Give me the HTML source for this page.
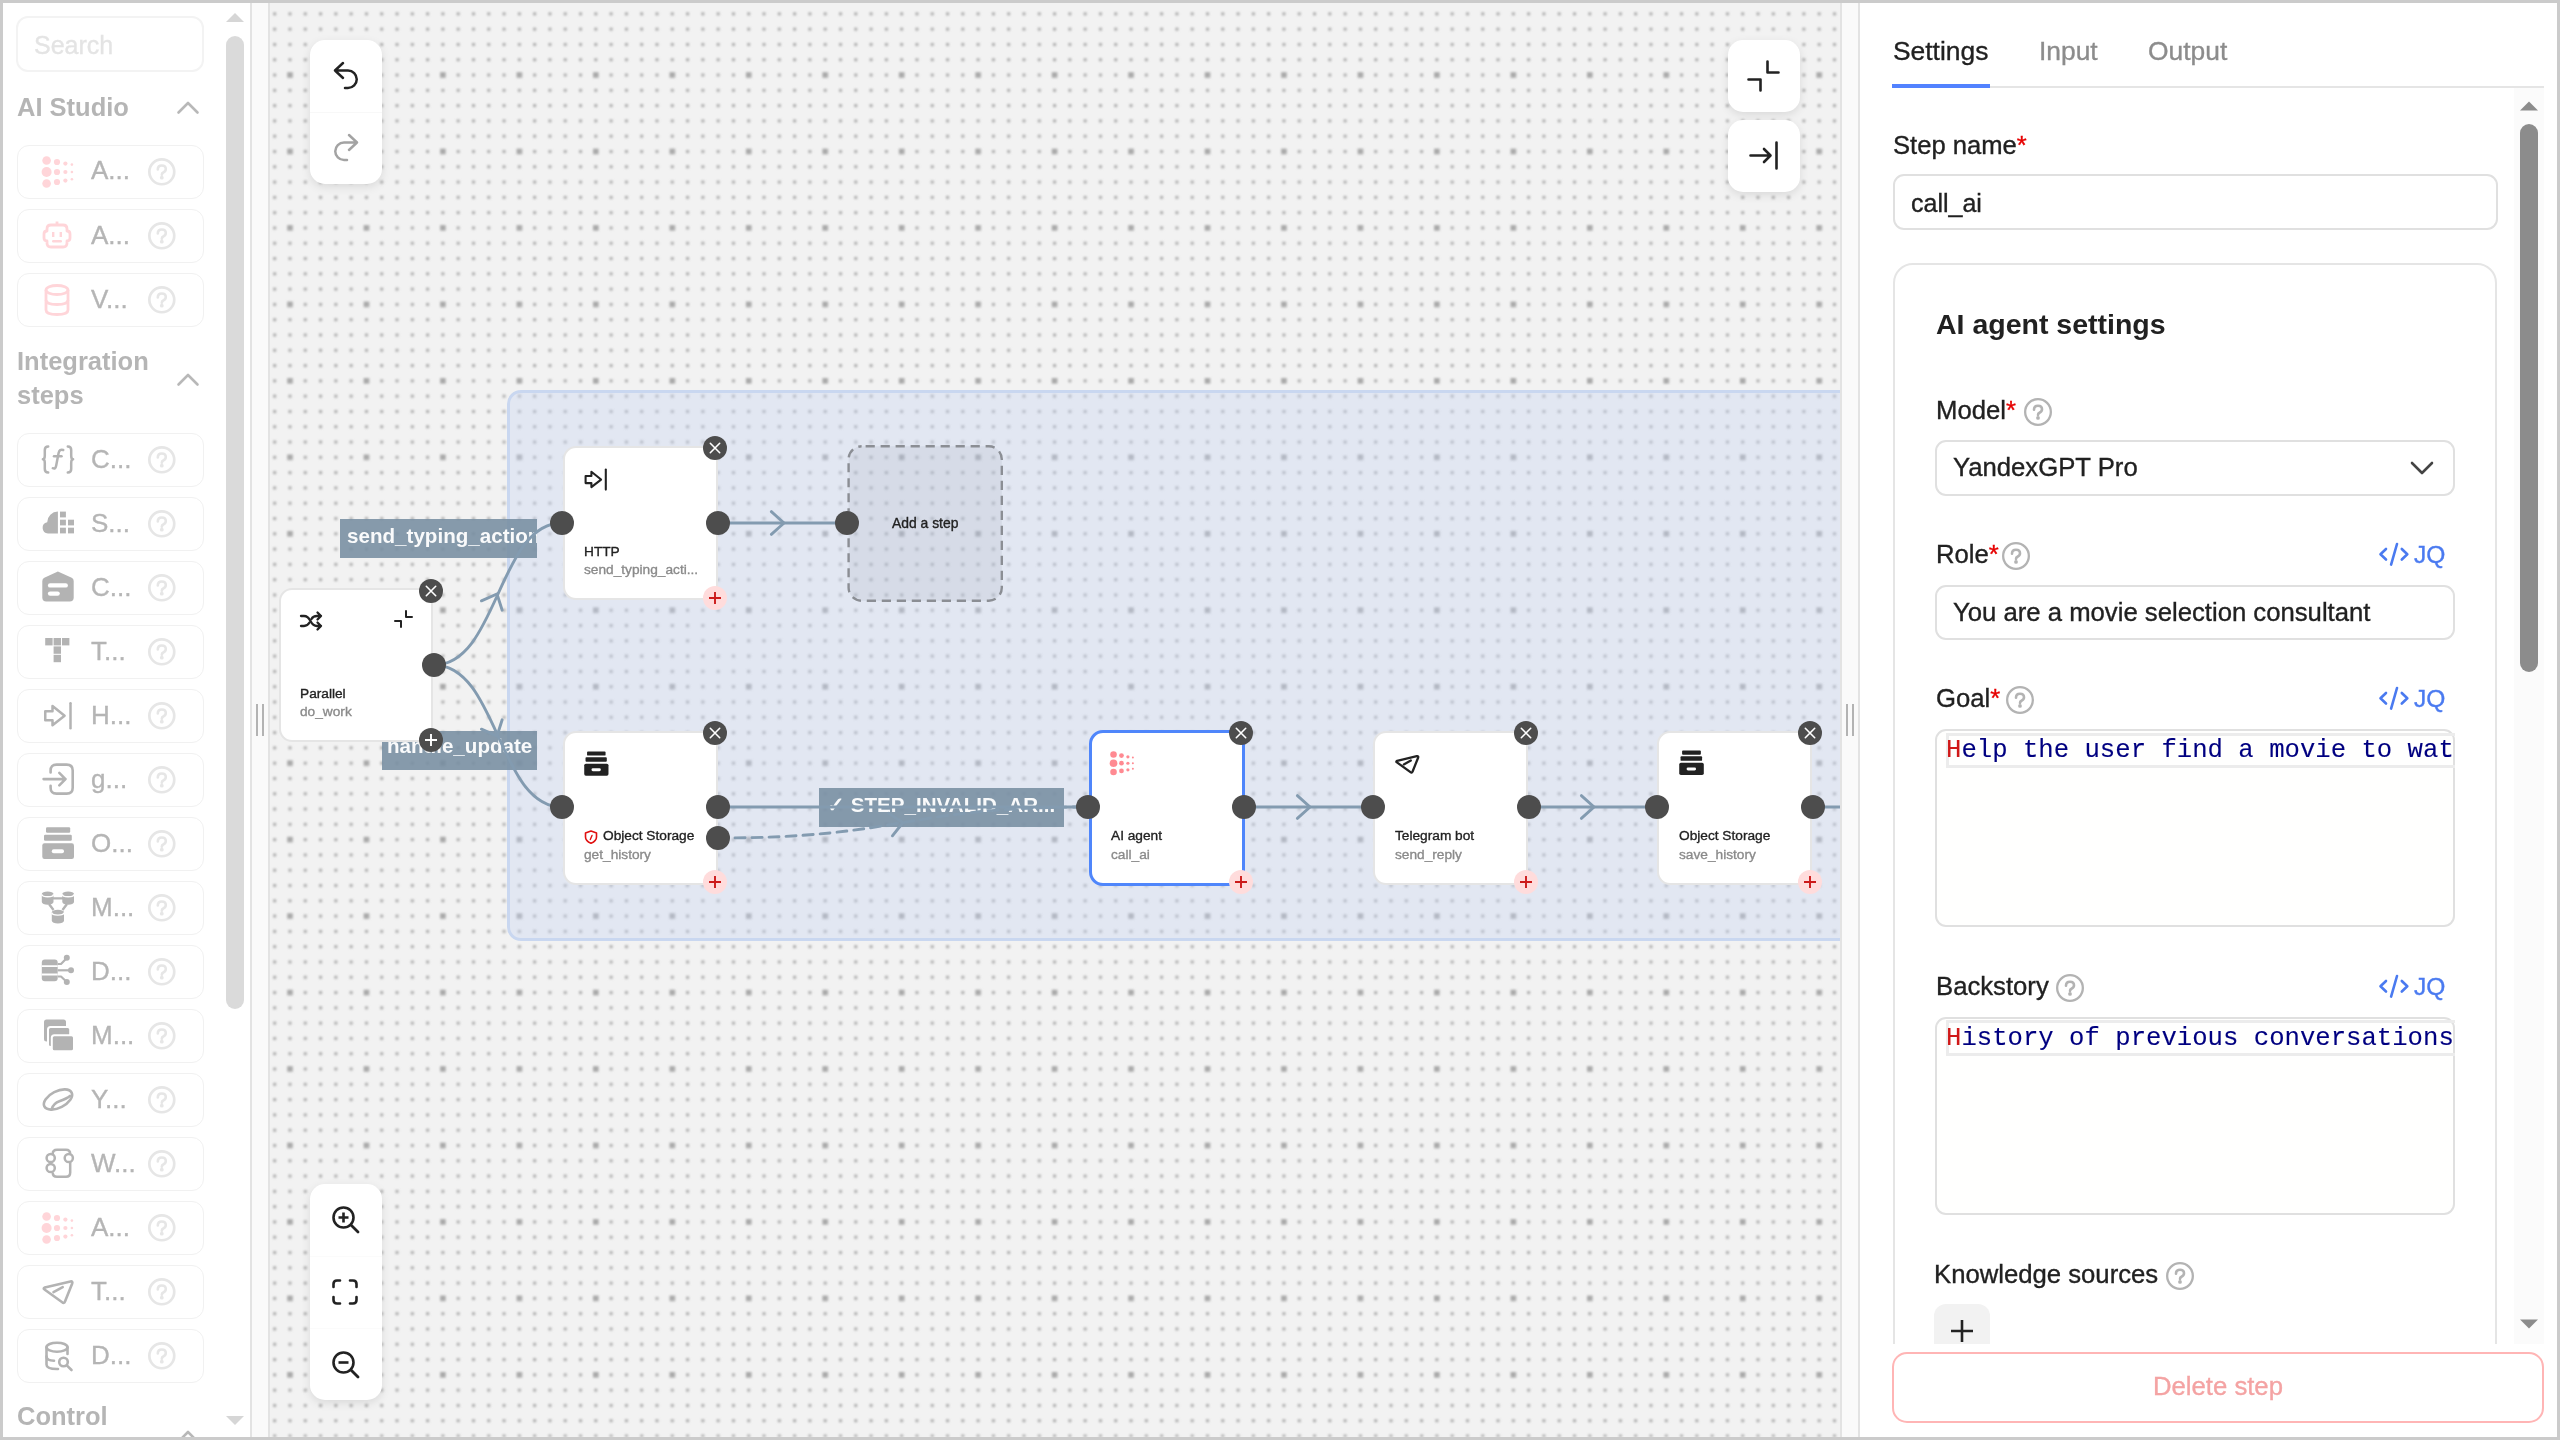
<!DOCTYPE html>
<html><head><meta charset="utf-8"><style>
html,body{margin:0;padding:0;}
body{width:2560px;height:1440px;position:relative;overflow:hidden;background:#cbcbcb;font-family:"Liberation Sans",sans-serif;}
.t{position:absolute;line-height:1;white-space:nowrap;will-change:transform;-webkit-text-stroke:0.35px currentColor;}
svg{overflow:visible;}
</style></head><body>

<div style="position:absolute;left:3px;top:3px;width:247px;height:1434px;box-sizing:border-box;background:#fff;"></div>
<div style="position:absolute;left:250px;top:3px;width:2px;height:1434px;box-sizing:border-box;background:#e3e3e3;"></div>
<div style="position:absolute;left:252px;top:3px;width:16px;height:1434px;box-sizing:border-box;background:#fafafa;"></div>
<div style="position:absolute;left:268px;top:3px;width:2px;height:1434px;box-sizing:border-box;background:#e3e3e3;"></div>
<div style="position:absolute;left:256px;top:704px;width:2px;height:32px;box-sizing:border-box;background:#b3b3b3;"></div>
<div style="position:absolute;left:262px;top:704px;width:2px;height:32px;box-sizing:border-box;background:#b3b3b3;"></div>
<div style="position:absolute;left:1840px;top:3px;width:2px;height:1434px;box-sizing:border-box;background:#e3e3e3;"></div>
<div style="position:absolute;left:1842px;top:3px;width:16px;height:1434px;box-sizing:border-box;background:#fafafa;"></div>
<div style="position:absolute;left:1858px;top:3px;width:2px;height:1434px;box-sizing:border-box;background:#e3e3e3;"></div>
<div style="position:absolute;left:1846px;top:704px;width:2px;height:32px;box-sizing:border-box;background:#b3b3b3;"></div>
<div style="position:absolute;left:1852px;top:704px;width:2px;height:32px;box-sizing:border-box;background:#b3b3b3;"></div>
<div style="position:absolute;left:1860px;top:3px;width:697px;height:1434px;box-sizing:border-box;background:#fff;"></div>
<div style="position:absolute;left:3px;top:3px;width:247px;height:1434px;overflow:hidden;">
<div style="position:absolute;left:-3px;top:-3px;width:260px;height:1440px;">
<div style="position:absolute;left:16px;top:16px;width:187.5px;height:55.5px;box-sizing:border-box;border:2px solid #f3f3f3;border-radius:12px;"></div>
<div class="t" style="left:34px;top:32.84px;font-size:25px;color:#e4e4e4;font-weight:400;font-family:'Liberation Sans', sans-serif;">Search</div>
<svg style="position:absolute;left:226px;top:12px;" width="18" height="11" viewBox="0 0 18 11"><path d="M0,10 L9,1 L18,10 Z" fill="#d6d6d6"/></svg>
<div style="position:absolute;left:226px;top:36px;width:18px;height:973px;box-sizing:border-box;background:#dadada;border-radius:9px;"></div>
<svg style="position:absolute;left:226px;top:1415px;" width="18" height="11" viewBox="0 0 18 11"><path d="M0,1 L9,10 L18,1 Z" fill="#d6d6d6"/></svg>
<div class="t" style="left:16.5px;top:94.61px;font-size:25.5px;color:#b5b5b5;font-weight:700;font-family:'Liberation Sans', sans-serif;-webkit-text-stroke:0;">AI Studio</div>
<svg style="position:absolute;left:177px;top:100px;" width="22" height="14" viewBox="0 0 22 14"><path d="M1.5,12.5 L11,3 L20.5,12.5" fill="none" stroke="#b8b8b8" stroke-width="2.6" stroke-linecap="round" stroke-linejoin="round"/></svg>
<div class="t" style="left:16.5px;top:348.71px;font-size:25.5px;color:#b5b5b5;font-weight:700;font-family:'Liberation Sans', sans-serif;-webkit-text-stroke:0;">Integration</div>
<div class="t" style="left:16.5px;top:383.11px;font-size:25.5px;color:#b5b5b5;font-weight:700;font-family:'Liberation Sans', sans-serif;-webkit-text-stroke:0;">steps</div>
<svg style="position:absolute;left:177px;top:372px;" width="22" height="14" viewBox="0 0 22 14"><path d="M1.5,12.5 L11,3 L20.5,12.5" fill="none" stroke="#b8b8b8" stroke-width="2.6" stroke-linecap="round" stroke-linejoin="round"/></svg>
<div class="t" style="left:16.9px;top:1404.01px;font-size:25.5px;color:#b5b5b5;font-weight:700;font-family:'Liberation Sans', sans-serif;-webkit-text-stroke:0;">Control</div>
<svg style="position:absolute;left:177px;top:1429px;" width="22" height="14" viewBox="0 0 22 14"><path d="M1.5,12.5 L11,3 L20.5,12.5" fill="none" stroke="#b8b8b8" stroke-width="2.6" stroke-linecap="round" stroke-linejoin="round"/></svg>
<div style="position:absolute;left:16.5px;top:144.5px;width:187px;height:54.5px;box-sizing:border-box;border:1.5px solid #f1f1f1;border-radius:12px;"></div>
<svg style="position:absolute;left:42px;top:156px;" width="32" height="32" viewBox="0 0 32 32"><circle cx="4.6" cy="4.5" r="4.3" fill="#ffd5d9"/><circle cx="4.6" cy="16" r="5.0" fill="#ffd5d9"/><circle cx="4.6" cy="27.5" r="4.3" fill="#ffd5d9"/><circle cx="15" cy="6" r="3.1" fill="#ffd5d9"/><circle cx="15" cy="16" r="3.1" fill="#ffd5d9"/><circle cx="15" cy="26" r="3.1" fill="#ffd5d9"/><circle cx="23.4" cy="7.6" r="2.1" fill="#ffd5d9"/><circle cx="23.4" cy="16" r="2.1" fill="#ffd5d9"/><circle cx="23.4" cy="24.6" r="2.1" fill="#ffd5d9"/><circle cx="29.9" cy="8.6" r="1.3" fill="#ffd5d9"/><circle cx="29.9" cy="16" r="1.3" fill="#ffd5d9"/><circle cx="29.9" cy="23.2" r="1.3" fill="#ffd5d9"/></svg>
<div class="t" style="left:90.5px;top:157.49px;font-size:26px;color:#b5b5b5;font-weight:400;font-family:'Liberation Sans', sans-serif;">A...</div>
<svg style="position:absolute;left:146.2px;top:155.9px;" width="31.6" height="31.6" viewBox="0 0 31.6 31.6"><circle cx="15.8" cy="15.8" r="12.450000000000001" fill="none" stroke="#e6e6e6" stroke-width="2.7"/><path d="M11.8,13.5 q0,-4 4,-4 q4,0 4,3.6 q0,2.3 -2.5,3.4 q-1.5,0.7 -1.5,2.2" fill="none" stroke="#e6e6e6" stroke-width="2.6" stroke-linecap="round" stroke-linejoin="round"/><circle cx="15.8" cy="21.7" r="1.9" fill="#e6e6e6"/></svg>
<div style="position:absolute;left:16.5px;top:208.6px;width:187px;height:54.5px;box-sizing:border-box;border:1.5px solid #f1f1f1;border-radius:12px;"></div>
<svg style="position:absolute;left:42px;top:220.1px;" width="32" height="32" viewBox="0 0 32 32"><g fill="none" stroke="#ffd5d9" stroke-width="2.8" stroke-linejoin="round"><path d="M9,5 H21 Q25,5 25,9 V11 Q28,11 28,14 V18 Q28,21 25,21 V23 Q25,27 21,27 H9 Q5,27 5,23 V21 Q2,21 2,18 V14 Q2,11 5,11 V9 Q5,5 9,5 Z"/><path d="M15,5 V1.5"/></g><rect x="10" y="12" width="2.4" height="5" fill="#ffd5d9"/><rect x="17.6" y="12" width="2.4" height="5" fill="#ffd5d9"/><rect x="10" y="20" width="10" height="2.4" rx="1.2" fill="#ffd5d9"/></svg>
<div class="t" style="left:90.5px;top:221.59px;font-size:26px;color:#b5b5b5;font-weight:400;font-family:'Liberation Sans', sans-serif;">A...</div>
<svg style="position:absolute;left:146.2px;top:220px;" width="31.6" height="31.6" viewBox="0 0 31.6 31.6"><circle cx="15.8" cy="15.8" r="12.450000000000001" fill="none" stroke="#e6e6e6" stroke-width="2.7"/><path d="M11.8,13.5 q0,-4 4,-4 q4,0 4,3.6 q0,2.3 -2.5,3.4 q-1.5,0.7 -1.5,2.2" fill="none" stroke="#e6e6e6" stroke-width="2.6" stroke-linecap="round" stroke-linejoin="round"/><circle cx="15.8" cy="21.7" r="1.9" fill="#e6e6e6"/></svg>
<div style="position:absolute;left:16.5px;top:272.7px;width:187px;height:54.5px;box-sizing:border-box;border:1.5px solid #f1f1f1;border-radius:12px;"></div>
<svg style="position:absolute;left:42px;top:284.2px;" width="32" height="32" viewBox="0 0 32 32"><g fill="none" stroke="#ffd5d9" stroke-width="2.8"><ellipse cx="15" cy="6" rx="11" ry="4.5"/><path d="M4,6 V26 Q4,30.5 15,30.5 Q26,30.5 26,26 V6"/><path d="M4,16 Q4,20.5 15,20.5 Q26,20.5 26,16"/></g></svg>
<div class="t" style="left:90.5px;top:285.69px;font-size:26px;color:#b5b5b5;font-weight:400;font-family:'Liberation Sans', sans-serif;">V...</div>
<svg style="position:absolute;left:146.2px;top:284.1px;" width="31.6" height="31.6" viewBox="0 0 31.6 31.6"><circle cx="15.8" cy="15.8" r="12.450000000000001" fill="none" stroke="#e6e6e6" stroke-width="2.7"/><path d="M11.8,13.5 q0,-4 4,-4 q4,0 4,3.6 q0,2.3 -2.5,3.4 q-1.5,0.7 -1.5,2.2" fill="none" stroke="#e6e6e6" stroke-width="2.6" stroke-linecap="round" stroke-linejoin="round"/><circle cx="15.8" cy="21.7" r="1.9" fill="#e6e6e6"/></svg>
<div style="position:absolute;left:16.5px;top:432.8px;width:187px;height:54.5px;box-sizing:border-box;border:1.5px solid #f1f1f1;border-radius:12px;"></div>
<svg style="position:absolute;left:42px;top:444.3px;" width="32" height="32" viewBox="0 0 32 32"><g fill="none" stroke="#b3b3b3" stroke-width="2.5" stroke-linecap="round" stroke-linejoin="round"><path d="M6.2,2.5 Q2.8,2.5 2.8,6 V11.5 Q2.8,15.2 0.9,15.2 Q2.8,15.2 2.8,19 V25 Q2.8,28.5 6.2,28.5"/><path d="M25.8,2.5 Q29.2,2.5 29.2,6 V11.5 Q29.2,15.2 31.1,15.2 Q29.2,15.2 29.2,19 V25 Q29.2,28.5 25.8,28.5"/><path d="M21.2,6 Q17.5,4.8 16.6,9 L14.2,21.5 Q13.5,25.5 10.8,24.2"/><path d="M12,12.2 H19.5"/></g></svg>
<div class="t" style="left:90.5px;top:445.79px;font-size:26px;color:#b5b5b5;font-weight:400;font-family:'Liberation Sans', sans-serif;">C...</div>
<svg style="position:absolute;left:146.2px;top:444.2px;" width="31.6" height="31.6" viewBox="0 0 31.6 31.6"><circle cx="15.8" cy="15.8" r="12.450000000000001" fill="none" stroke="#e6e6e6" stroke-width="2.7"/><path d="M11.8,13.5 q0,-4 4,-4 q4,0 4,3.6 q0,2.3 -2.5,3.4 q-1.5,0.7 -1.5,2.2" fill="none" stroke="#e6e6e6" stroke-width="2.6" stroke-linecap="round" stroke-linejoin="round"/><circle cx="15.8" cy="21.7" r="1.9" fill="#e6e6e6"/></svg>
<div style="position:absolute;left:16.5px;top:496.8px;width:187px;height:54.5px;box-sizing:border-box;border:1.5px solid #f1f1f1;border-radius:12px;"></div>
<svg style="position:absolute;left:42px;top:508.3px;" width="32" height="32" viewBox="0 0 32 32"><path d="M15.9,25.4 H6 A5.6,5.6 0 0 1 5.2,14.3 A10.8,10.8 0 0 1 15.9,3.6 Z" fill="#b3b3b3"/><rect x="18" y="3.6" width="5.9" height="5.8" fill="#b3b3b3"/><rect x="18" y="11.7" width="5.9" height="5.7" fill="#b3b3b3"/><rect x="18" y="19.7" width="5.9" height="5.7" fill="#b3b3b3"/><rect x="26" y="11.7" width="6" height="5.7" fill="#b3b3b3"/><rect x="26" y="19.7" width="6" height="5.7" fill="#b3b3b3"/></svg>
<div class="t" style="left:90.5px;top:509.79px;font-size:26px;color:#b5b5b5;font-weight:400;font-family:'Liberation Sans', sans-serif;">S...</div>
<svg style="position:absolute;left:146.2px;top:508.2px;" width="31.6" height="31.6" viewBox="0 0 31.6 31.6"><circle cx="15.8" cy="15.8" r="12.450000000000001" fill="none" stroke="#e6e6e6" stroke-width="2.7"/><path d="M11.8,13.5 q0,-4 4,-4 q4,0 4,3.6 q0,2.3 -2.5,3.4 q-1.5,0.7 -1.5,2.2" fill="none" stroke="#e6e6e6" stroke-width="2.6" stroke-linecap="round" stroke-linejoin="round"/><circle cx="15.8" cy="21.7" r="1.9" fill="#e6e6e6"/></svg>
<div style="position:absolute;left:16.5px;top:560.8px;width:187px;height:54.5px;box-sizing:border-box;border:1.5px solid #f1f1f1;border-radius:12px;"></div>
<svg style="position:absolute;left:42px;top:572.3px;" width="32" height="32" viewBox="0 0 32 32"><path d="M0.3,9 Q0.3,6.8 2.3,5.8 L15.9,-0.6 L29.7,5.8 Q31.7,6.8 31.7,9 V25.4 Q31.7,29.4 27.7,29.4 H4.3 Q0.3,29.4 0.3,25.4 Z" fill="#b3b3b3"/><rect x="5.9" y="11.2" width="20" height="4.4" rx="2.2" fill="#fff"/><rect x="5.9" y="19.4" width="11.9" height="4.4" rx="2.2" fill="#fff"/></svg>
<div class="t" style="left:90.5px;top:573.79px;font-size:26px;color:#b5b5b5;font-weight:400;font-family:'Liberation Sans', sans-serif;">C...</div>
<svg style="position:absolute;left:146.2px;top:572.2px;" width="31.6" height="31.6" viewBox="0 0 31.6 31.6"><circle cx="15.8" cy="15.8" r="12.450000000000001" fill="none" stroke="#e6e6e6" stroke-width="2.7"/><path d="M11.8,13.5 q0,-4 4,-4 q4,0 4,3.6 q0,2.3 -2.5,3.4 q-1.5,0.7 -1.5,2.2" fill="none" stroke="#e6e6e6" stroke-width="2.6" stroke-linecap="round" stroke-linejoin="round"/><circle cx="15.8" cy="21.7" r="1.9" fill="#e6e6e6"/></svg>
<div style="position:absolute;left:16.5px;top:624.8px;width:187px;height:54.5px;box-sizing:border-box;border:1.5px solid #f1f1f1;border-radius:12px;"></div>
<svg style="position:absolute;left:42px;top:636.3px;" width="32" height="32" viewBox="0 0 32 32"><rect x="3.2" y="2" width="7.4" height="7.4" fill="#b3b3b3"/><rect x="11.6" y="2" width="7.4" height="7.4" fill="#b3b3b3"/><rect x="20" y="2" width="7.4" height="7.4" fill="#b3b3b3"/><rect x="11.6" y="10.4" width="7.4" height="7.4" fill="#b3b3b3"/><rect x="11.6" y="18.8" width="7.4" height="7.4" fill="#b3b3b3"/></svg>
<div class="t" style="left:90.5px;top:637.79px;font-size:26px;color:#b5b5b5;font-weight:400;font-family:'Liberation Sans', sans-serif;">T...</div>
<svg style="position:absolute;left:146.2px;top:636.2px;" width="31.6" height="31.6" viewBox="0 0 31.6 31.6"><circle cx="15.8" cy="15.8" r="12.450000000000001" fill="none" stroke="#e6e6e6" stroke-width="2.7"/><path d="M11.8,13.5 q0,-4 4,-4 q4,0 4,3.6 q0,2.3 -2.5,3.4 q-1.5,0.7 -1.5,2.2" fill="none" stroke="#e6e6e6" stroke-width="2.6" stroke-linecap="round" stroke-linejoin="round"/><circle cx="15.8" cy="21.7" r="1.9" fill="#e6e6e6"/></svg>
<div style="position:absolute;left:16.5px;top:688.8px;width:187px;height:54.5px;box-sizing:border-box;border:1.5px solid #f1f1f1;border-radius:12px;"></div>
<svg style="position:absolute;left:42px;top:700.3px;" width="32" height="32" viewBox="0 0 32 32"><g fill="none" stroke="#b3b3b3" stroke-width="2.5" stroke-linejoin="round" stroke-linecap="round"><path d="M3.25,11.25 H10.5 V6 L22.6,15.7 L10.5,25.15 V20.15 H3.25 Z"/><path d="M28.5,3.25 V28.25"/></g></svg>
<div class="t" style="left:90.5px;top:701.79px;font-size:26px;color:#b5b5b5;font-weight:400;font-family:'Liberation Sans', sans-serif;">H...</div>
<svg style="position:absolute;left:146.2px;top:700.2px;" width="31.6" height="31.6" viewBox="0 0 31.6 31.6"><circle cx="15.8" cy="15.8" r="12.450000000000001" fill="none" stroke="#e6e6e6" stroke-width="2.7"/><path d="M11.8,13.5 q0,-4 4,-4 q4,0 4,3.6 q0,2.3 -2.5,3.4 q-1.5,0.7 -1.5,2.2" fill="none" stroke="#e6e6e6" stroke-width="2.6" stroke-linecap="round" stroke-linejoin="round"/><circle cx="15.8" cy="21.7" r="1.9" fill="#e6e6e6"/></svg>
<div style="position:absolute;left:16.5px;top:752.8px;width:187px;height:54.5px;box-sizing:border-box;border:1.5px solid #f1f1f1;border-radius:12px;"></div>
<svg style="position:absolute;left:42px;top:764.3px;" width="32" height="32" viewBox="0 0 32 32"><g fill="none" stroke="#b3b3b3" stroke-width="2.6" stroke-linecap="round" stroke-linejoin="round"><path d="M8.6,8.4 V6.5 Q8.6,0.6 14.5,0.6 H24.7 Q30.7,0.6 30.7,6.5 V23.7 Q30.7,29.6 24.7,29.6 H14.5 Q8.6,29.6 8.6,23.7 V21.8"/><path d="M1.6,15.1 H23.5 M17.3,8.9 L23.5,15.1 L17.3,21.3"/></g></svg>
<div class="t" style="left:90.5px;top:765.79px;font-size:26px;color:#b5b5b5;font-weight:400;font-family:'Liberation Sans', sans-serif;">g...</div>
<svg style="position:absolute;left:146.2px;top:764.2px;" width="31.6" height="31.6" viewBox="0 0 31.6 31.6"><circle cx="15.8" cy="15.8" r="12.450000000000001" fill="none" stroke="#e6e6e6" stroke-width="2.7"/><path d="M11.8,13.5 q0,-4 4,-4 q4,0 4,3.6 q0,2.3 -2.5,3.4 q-1.5,0.7 -1.5,2.2" fill="none" stroke="#e6e6e6" stroke-width="2.6" stroke-linecap="round" stroke-linejoin="round"/><circle cx="15.8" cy="21.7" r="1.9" fill="#e6e6e6"/></svg>
<div style="position:absolute;left:16.5px;top:816.8px;width:187px;height:54.5px;box-sizing:border-box;border:1.5px solid #f1f1f1;border-radius:12px;"></div>
<svg style="position:absolute;left:42px;top:828.3px;" width="32" height="32" viewBox="0 0 32 32"><rect x="4" y="-0.7" width="24.2" height="5.4" rx="1.2" fill="#b3b3b3"/><rect x="2" y="6.8" width="27.8" height="5.9" rx="1.2" fill="#b3b3b3"/><rect x="0.3" y="15.2" width="31.7" height="15.8" rx="2.2" fill="#b3b3b3"/><rect x="9.8" y="21.3" width="12.2" height="3.9" rx="1.9" fill="#fff"/></svg>
<div class="t" style="left:90.5px;top:829.79px;font-size:26px;color:#b5b5b5;font-weight:400;font-family:'Liberation Sans', sans-serif;">O...</div>
<svg style="position:absolute;left:146.2px;top:828.2px;" width="31.6" height="31.6" viewBox="0 0 31.6 31.6"><circle cx="15.8" cy="15.8" r="12.450000000000001" fill="none" stroke="#e6e6e6" stroke-width="2.7"/><path d="M11.8,13.5 q0,-4 4,-4 q4,0 4,3.6 q0,2.3 -2.5,3.4 q-1.5,0.7 -1.5,2.2" fill="none" stroke="#e6e6e6" stroke-width="2.6" stroke-linecap="round" stroke-linejoin="round"/><circle cx="15.8" cy="21.7" r="1.9" fill="#e6e6e6"/></svg>
<div style="position:absolute;left:16.5px;top:880.8px;width:187px;height:54.5px;box-sizing:border-box;border:1.5px solid #f1f1f1;border-radius:12px;"></div>
<svg style="position:absolute;left:42px;top:892.3px;" width="32" height="32" viewBox="0 0 32 32"><path d="M11,6.4 H21 M7,12 L11.5,18 M25,12 L20.5,18" stroke="#b3b3b3" stroke-width="2.4" fill="none"/><path d="M-0.2,2.0 a5.85,2.6 0 0 1 11.7,0 V10.100000000000001 a5.85,2.6 0 0 1 -11.7,0 Z" fill="#b3b3b3"/><path d="M-0.2,2.1999999999999997 a5.85,2.6 0 0 0 11.7,0" fill="none" stroke="#fff" stroke-width="1.4"/><path d="M20.3,2.0 a5.85,2.6 0 0 1 11.7,0 V10.100000000000001 a5.85,2.6 0 0 1 -11.7,0 Z" fill="#b3b3b3"/><path d="M20.3,2.1999999999999997 a5.85,2.6 0 0 0 11.7,0" fill="none" stroke="#fff" stroke-width="1.4"/><path d="M9.8,20.3 a6.1,2.6 0 0 1 12.2,0 V28.799999999999997 a6.1,2.6 0 0 1 -12.2,0 Z" fill="#b3b3b3"/><path d="M9.8,20.5 a6.1,2.6 0 0 0 12.2,0" fill="none" stroke="#fff" stroke-width="1.4"/></svg>
<div class="t" style="left:90.5px;top:893.79px;font-size:26px;color:#b5b5b5;font-weight:400;font-family:'Liberation Sans', sans-serif;">M...</div>
<svg style="position:absolute;left:146.2px;top:892.2px;" width="31.6" height="31.6" viewBox="0 0 31.6 31.6"><circle cx="15.8" cy="15.8" r="12.450000000000001" fill="none" stroke="#e6e6e6" stroke-width="2.7"/><path d="M11.8,13.5 q0,-4 4,-4 q4,0 4,3.6 q0,2.3 -2.5,3.4 q-1.5,0.7 -1.5,2.2" fill="none" stroke="#e6e6e6" stroke-width="2.6" stroke-linecap="round" stroke-linejoin="round"/><circle cx="15.8" cy="21.7" r="1.9" fill="#e6e6e6"/></svg>
<div style="position:absolute;left:16.5px;top:944.8px;width:187px;height:54.5px;box-sizing:border-box;border:1.5px solid #f1f1f1;border-radius:12px;"></div>
<svg style="position:absolute;left:42px;top:956.3px;" width="32" height="32" viewBox="0 0 32 32"><rect x="-0.2" y="3.5" width="15.9" height="21.7" rx="3" fill="#b3b3b3"/><path d="M-0.2,10.2 H15.7 M-0.2,18.5 H15.7" stroke="#fff" stroke-width="1.8"/><g fill="none" stroke="#b3b3b3" stroke-width="2.2" stroke-linejoin="round"><path d="M15.7,8 H19 L24.8,2"/><path d="M15.7,14.3 H29"/><path d="M15.7,20.5 H19 L24.8,26"/></g><circle cx="24.8" cy="1.8" r="3" fill="#b3b3b3"/><circle cx="29" cy="14.3" r="3" fill="#b3b3b3"/><circle cx="24.8" cy="26" r="3" fill="#b3b3b3"/></svg>
<div class="t" style="left:90.5px;top:957.79px;font-size:26px;color:#b5b5b5;font-weight:400;font-family:'Liberation Sans', sans-serif;">D...</div>
<svg style="position:absolute;left:146.2px;top:956.2px;" width="31.6" height="31.6" viewBox="0 0 31.6 31.6"><circle cx="15.8" cy="15.8" r="12.450000000000001" fill="none" stroke="#e6e6e6" stroke-width="2.7"/><path d="M11.8,13.5 q0,-4 4,-4 q4,0 4,3.6 q0,2.3 -2.5,3.4 q-1.5,0.7 -1.5,2.2" fill="none" stroke="#e6e6e6" stroke-width="2.6" stroke-linecap="round" stroke-linejoin="round"/><circle cx="15.8" cy="21.7" r="1.9" fill="#e6e6e6"/></svg>
<div style="position:absolute;left:16.5px;top:1008.8px;width:187px;height:54.5px;box-sizing:border-box;border:1.5px solid #f1f1f1;border-radius:12px;"></div>
<svg style="position:absolute;left:42px;top:1020.3px;" width="32" height="32" viewBox="0 0 32 32"><rect x="2" y="-0.5" width="22" height="22" rx="2.5" fill="#b3b3b3"/><rect x="6" y="7" width="22.2" height="20" rx="2.5" fill="#b3b3b3" stroke="#fff" stroke-width="2"/><rect x="9.8" y="15.3" width="22.2" height="15.9" rx="2.5" fill="#b3b3b3" stroke="#fff" stroke-width="2"/></svg>
<div class="t" style="left:90.5px;top:1021.79px;font-size:26px;color:#b5b5b5;font-weight:400;font-family:'Liberation Sans', sans-serif;">M...</div>
<svg style="position:absolute;left:146.2px;top:1020.2px;" width="31.6" height="31.6" viewBox="0 0 31.6 31.6"><circle cx="15.8" cy="15.8" r="12.450000000000001" fill="none" stroke="#e6e6e6" stroke-width="2.7"/><path d="M11.8,13.5 q0,-4 4,-4 q4,0 4,3.6 q0,2.3 -2.5,3.4 q-1.5,0.7 -1.5,2.2" fill="none" stroke="#e6e6e6" stroke-width="2.6" stroke-linecap="round" stroke-linejoin="round"/><circle cx="15.8" cy="21.7" r="1.9" fill="#e6e6e6"/></svg>
<div style="position:absolute;left:16.5px;top:1072.8px;width:187px;height:54.5px;box-sizing:border-box;border:1.5px solid #f1f1f1;border-radius:12px;"></div>
<svg style="position:absolute;left:42px;top:1084.3px;" width="32" height="32" viewBox="0 0 32 32"><g fill="none" stroke="#b3b3b3" stroke-width="2.6" stroke-linecap="round"><ellipse cx="16" cy="15.5" rx="15.3" ry="8.3" transform="rotate(-27 16 15.5)"/><path d="M9.5,25.5 Q11,19.5 18,17 Q25,14.5 28,12"/></g></svg>
<div class="t" style="left:90.5px;top:1085.79px;font-size:26px;color:#b5b5b5;font-weight:400;font-family:'Liberation Sans', sans-serif;">Y...</div>
<svg style="position:absolute;left:146.2px;top:1084.2px;" width="31.6" height="31.6" viewBox="0 0 31.6 31.6"><circle cx="15.8" cy="15.8" r="12.450000000000001" fill="none" stroke="#e6e6e6" stroke-width="2.7"/><path d="M11.8,13.5 q0,-4 4,-4 q4,0 4,3.6 q0,2.3 -2.5,3.4 q-1.5,0.7 -1.5,2.2" fill="none" stroke="#e6e6e6" stroke-width="2.6" stroke-linecap="round" stroke-linejoin="round"/><circle cx="15.8" cy="21.7" r="1.9" fill="#e6e6e6"/></svg>
<div style="position:absolute;left:16.5px;top:1136.8px;width:187px;height:54.5px;box-sizing:border-box;border:1.5px solid #f1f1f1;border-radius:12px;"></div>
<svg style="position:absolute;left:42px;top:1148.3px;" width="32" height="32" viewBox="0 0 32 32"><g fill="none" stroke="#b3b3b3" stroke-width="2.5"><path d="M10.7,6 Q10.7,1.7 15,1.7 H24 Q28.2,1.7 28.2,6 M28.2,14.3 V24.5 Q28.2,28.8 24,28.8 H15 Q10.7,28.8 10.7,24.5"/><circle cx="8.7" cy="10" r="4.1" fill="#fff"/><circle cx="26.8" cy="10" r="4.1" fill="#fff"/><circle cx="8.7" cy="20" r="4.1" fill="#fff"/></g></svg>
<div class="t" style="left:90.5px;top:1149.79px;font-size:26px;color:#b5b5b5;font-weight:400;font-family:'Liberation Sans', sans-serif;">W...</div>
<svg style="position:absolute;left:146.2px;top:1148.2px;" width="31.6" height="31.6" viewBox="0 0 31.6 31.6"><circle cx="15.8" cy="15.8" r="12.450000000000001" fill="none" stroke="#e6e6e6" stroke-width="2.7"/><path d="M11.8,13.5 q0,-4 4,-4 q4,0 4,3.6 q0,2.3 -2.5,3.4 q-1.5,0.7 -1.5,2.2" fill="none" stroke="#e6e6e6" stroke-width="2.6" stroke-linecap="round" stroke-linejoin="round"/><circle cx="15.8" cy="21.7" r="1.9" fill="#e6e6e6"/></svg>
<div style="position:absolute;left:16.5px;top:1200.8px;width:187px;height:54.5px;box-sizing:border-box;border:1.5px solid #f1f1f1;border-radius:12px;"></div>
<svg style="position:absolute;left:42px;top:1212.3px;" width="32" height="32" viewBox="0 0 32 32"><circle cx="4.6" cy="4.5" r="4.3" fill="#ffd5d9"/><circle cx="4.6" cy="16" r="5.0" fill="#ffd5d9"/><circle cx="4.6" cy="27.5" r="4.3" fill="#ffd5d9"/><circle cx="15" cy="6" r="3.1" fill="#ffd5d9"/><circle cx="15" cy="16" r="3.1" fill="#ffd5d9"/><circle cx="15" cy="26" r="3.1" fill="#ffd5d9"/><circle cx="23.4" cy="7.6" r="2.1" fill="#ffd5d9"/><circle cx="23.4" cy="16" r="2.1" fill="#ffd5d9"/><circle cx="23.4" cy="24.6" r="2.1" fill="#ffd5d9"/><circle cx="29.9" cy="8.6" r="1.3" fill="#ffd5d9"/><circle cx="29.9" cy="16" r="1.3" fill="#ffd5d9"/><circle cx="29.9" cy="23.2" r="1.3" fill="#ffd5d9"/></svg>
<div class="t" style="left:90.5px;top:1213.79px;font-size:26px;color:#b5b5b5;font-weight:400;font-family:'Liberation Sans', sans-serif;">A...</div>
<svg style="position:absolute;left:146.2px;top:1212.2px;" width="31.6" height="31.6" viewBox="0 0 31.6 31.6"><circle cx="15.8" cy="15.8" r="12.450000000000001" fill="none" stroke="#e6e6e6" stroke-width="2.7"/><path d="M11.8,13.5 q0,-4 4,-4 q4,0 4,3.6 q0,2.3 -2.5,3.4 q-1.5,0.7 -1.5,2.2" fill="none" stroke="#e6e6e6" stroke-width="2.6" stroke-linecap="round" stroke-linejoin="round"/><circle cx="15.8" cy="21.7" r="1.9" fill="#e6e6e6"/></svg>
<div style="position:absolute;left:16.5px;top:1264.8px;width:187px;height:54.5px;box-sizing:border-box;border:1.5px solid #f1f1f1;border-radius:12px;"></div>
<svg style="position:absolute;left:42px;top:1276.3px;" width="32" height="32" viewBox="0 0 32 32"><g fill="none" stroke="#b3b3b3" stroke-width="2.6" stroke-linejoin="round" stroke-linecap="round"><path d="M2.5,13.5 Q0.8,12.5 2.8,11.5 L28.5,5.5 Q31,5 30.2,7.5 L23,25.5 Q22,27.8 20.2,26.3 Z"/><path d="M11.5,16.2 L20.7,11.2"/></g></svg>
<div class="t" style="left:90.5px;top:1277.79px;font-size:26px;color:#b5b5b5;font-weight:400;font-family:'Liberation Sans', sans-serif;">T...</div>
<svg style="position:absolute;left:146.2px;top:1276.2px;" width="31.6" height="31.6" viewBox="0 0 31.6 31.6"><circle cx="15.8" cy="15.8" r="12.450000000000001" fill="none" stroke="#e6e6e6" stroke-width="2.7"/><path d="M11.8,13.5 q0,-4 4,-4 q4,0 4,3.6 q0,2.3 -2.5,3.4 q-1.5,0.7 -1.5,2.2" fill="none" stroke="#e6e6e6" stroke-width="2.6" stroke-linecap="round" stroke-linejoin="round"/><circle cx="15.8" cy="21.7" r="1.9" fill="#e6e6e6"/></svg>
<div style="position:absolute;left:16.5px;top:1328.8px;width:187px;height:54.5px;box-sizing:border-box;border:1.5px solid #f1f1f1;border-radius:12px;"></div>
<svg style="position:absolute;left:42px;top:1340.3px;" width="32" height="32" viewBox="0 0 32 32"><g fill="none" stroke="#b3b3b3" stroke-width="2.6" stroke-linecap="round"><ellipse cx="15" cy="7.2" rx="10.5" ry="4.5"/><path d="M4.5,7.2 V24.5 Q4.5,29 15,29 H16"/><path d="M25.5,7.2 V14"/><path d="M4.5,16.5 Q4.5,20.5 12,20.8"/><circle cx="21.5" cy="22" r="4.3"/><path d="M24.8,25.3 L29.5,30"/></g></svg>
<div class="t" style="left:90.5px;top:1341.79px;font-size:26px;color:#b5b5b5;font-weight:400;font-family:'Liberation Sans', sans-serif;">D...</div>
<svg style="position:absolute;left:146.2px;top:1340.2px;" width="31.6" height="31.6" viewBox="0 0 31.6 31.6"><circle cx="15.8" cy="15.8" r="12.450000000000001" fill="none" stroke="#e6e6e6" stroke-width="2.7"/><path d="M11.8,13.5 q0,-4 4,-4 q4,0 4,3.6 q0,2.3 -2.5,3.4 q-1.5,0.7 -1.5,2.2" fill="none" stroke="#e6e6e6" stroke-width="2.6" stroke-linecap="round" stroke-linejoin="round"/><circle cx="15.8" cy="21.7" r="1.9" fill="#e6e6e6"/></svg>
</div></div>
<div style="position:absolute;left:270px;top:3px;width:1570px;height:1434px;overflow:hidden;background:#f2f2f2;">
<div style="position:absolute;left:-270px;top:-3px;width:2560px;height:1440px;">
<svg style="position:absolute;left:270px;top:3px;" width="1570" height="1434"><defs><filter id="blr" x="-50%" y="-50%" width="200%" height="200%"><feGaussianBlur stdDeviation="0.8"/></filter><pattern id="ps" patternUnits="userSpaceOnUse" x="2.2" y="8.4" width="15.292" height="15.292"><rect x="1" y="1" width="3" height="3" fill="#acacac"/></pattern><pattern id="pb" patternUnits="userSpaceOnUse" x="16.2" y="68.2" width="76.46" height="76.46"><rect x="1" y="1" width="5.6" height="5.6" fill="#a9a9a9"/></pattern></defs><g filter="url(#blr)"><rect width="1570" height="1434" fill="url(#ps)"/><rect width="1570" height="1434" fill="url(#pb)"/></g></svg>
<div style="position:absolute;left:506.5px;top:389.5px;width:1500px;height:551px;box-sizing:border-box;border:3px solid #c9d7f0;border-radius:14px;background:rgba(196,212,240,0.36);"></div>
<div style="position:absolute;left:340px;top:518.5px;width:197px;height:39px;background:rgba(117,140,160,0.86);overflow:hidden;">
<div class="t" style="left:7.3px;top:7.76px;font-size:20.6px;color:rgba(255,255,255,0.95);font-weight:700;-webkit-text-stroke:0;">send_typing_action</div>
</div>
<div style="position:absolute;left:382px;top:730.5px;width:155px;height:39px;background:rgba(117,140,160,0.86);overflow:hidden;">
<div class="t" style="left:5px;top:5.56px;font-size:20.6px;color:rgba(255,255,255,0.95);font-weight:700;-webkit-text-stroke:0;">handle_update</div>
</div>
<div style="position:absolute;left:818.5px;top:788px;width:245px;height:39px;background:rgba(117,140,160,0.86);overflow:hidden;">
<div class="t" style="left:8px;top:6.56px;font-size:20.6px;color:rgba(255,255,255,0.95);font-weight:700;-webkit-text-stroke:0;">&#10003; STEP_INVALID_AR...</div>
</div>
<svg style="position:absolute;left:0;top:0;" width="2560" height="1440"><path d="M434,665 C498,665 498,523 562,523" fill="none" stroke="#839bb0" stroke-width="2.9" stroke-linecap="round" /><path d="M481.44,600.84 L497,594 L502.18,610.19" fill="none" stroke="#839bb0" stroke-width="2.9" stroke-linecap="round" /><path d="M434,665 C498,665 498,807 562,807" fill="none" stroke="#839bb0" stroke-width="2.9" stroke-linecap="round" /><path d="M502.18,719.81 L497,736 L481.44,729.16" fill="none" stroke="#839bb0" stroke-width="2.9" stroke-linecap="round" /><path d="M718,523 H847" fill="none" stroke="#839bb0" stroke-width="2.9" stroke-linecap="round" /><path d="M771.37,511.62 L784,523 L771.37,534.38" fill="none" stroke="#839bb0" stroke-width="2.9" stroke-linecap="round" /><path d="M718,807 H1088" fill="none" stroke="#839bb0" stroke-width="2.9" stroke-linecap="round" /><path d="M718,838 C903,838 903,807 1088,807" fill="none" stroke="#839bb0" stroke-width="2.9" stroke-linecap="round" stroke-dasharray="10 7"/><path d="M888.66,813.37 L903,822.5 L892.42,835.81" fill="none" stroke="#839bb0" stroke-width="2.9" stroke-linecap="round" /><path d="M1244,807 H1373" fill="none" stroke="#839bb0" stroke-width="2.9" stroke-linecap="round" /><path d="M1297.37,795.62 L1310,807 L1297.37,818.38" fill="none" stroke="#839bb0" stroke-width="2.9" stroke-linecap="round" /><path d="M1529,807 H1657" fill="none" stroke="#839bb0" stroke-width="2.9" stroke-linecap="round" /><path d="M1581.37,795.62 L1594,807 L1581.37,818.38" fill="none" stroke="#839bb0" stroke-width="2.9" stroke-linecap="round" /><path d="M1813,807 H1850" fill="none" stroke="#839bb0" stroke-width="2.9" stroke-linecap="round" /></svg>
<div style="position:absolute;left:279px;top:588px;width:154px;height:154px;box-sizing:border-box;background:#fff;border:2.5px solid #e5e5e5;border-radius:13px;"></div>
<svg style="position:absolute;left:300px;top:611px;" width="22" height="20" viewBox="0 0 22 20"><g fill="none" stroke="#222" stroke-width="2.3" stroke-linecap="round" stroke-linejoin="round"><path d="M1,5 H4 Q8,5 10.5,10 Q13,15 17,15 H21 M17.5,11.5 L21,15 L17.5,18.5"/><path d="M1,15 H4 Q7.5,15 9.5,11.5 M11.5,8 Q13,5 17,5 H21 M17.5,1.5 L21,5 L17.5,8.5"/></g></svg>
<svg style="position:absolute;left:394px;top:609.5px;" width="19" height="18" viewBox="0 0 19 18"><g fill="none" stroke="#222" stroke-width="2.0" stroke-linecap="round" stroke-linejoin="round"><path d="M12,1 V7 H18 M1,11 H7 V17"/></g></svg>
<div class="t" style="left:299.5px;top:687.4px;font-size:13.7px;color:#222;font-weight:400;font-family:'Liberation Sans', sans-serif;">Parallel</div>
<div class="t" style="left:299.5px;top:704.9px;font-size:13.7px;color:#8a8a8a;font-weight:400;font-family:'Liberation Sans', sans-serif;">do_work</div>
<div style="position:absolute;left:563px;top:445.5px;width:155px;height:154px;box-sizing:border-box;background:#fff;border:2.5px solid #e5e5e5;border-radius:13px;"></div>
<svg style="position:absolute;left:583.4px;top:466.5px;transform-origin:0 0;transform:scale(0.8);" width="32" height="32" viewBox="0 0 32 32"><g fill="none" stroke="#222" stroke-width="2.6" stroke-linejoin="round" stroke-linecap="round"><path d="M3.25,11.25 H10.5 V6 L22.6,15.7 L10.5,25.15 V20.15 H3.25 Z"/><path d="M28.5,3.25 V28.25"/></g></svg>
<div class="t" style="left:584.2px;top:545.1px;font-size:13.7px;color:#222;font-weight:400;font-family:'Liberation Sans', sans-serif;">HTTP</div>
<div class="t" style="left:584.2px;top:563.1px;font-size:13.7px;color:#8a8a8a;font-weight:400;font-family:'Liberation Sans', sans-serif;">send_typing_acti...</div>
<svg style="position:absolute;left:846px;top:443px;" width="160" height="160" viewBox="0 0 160 160"><rect x="2.6" y="3.3" width="153.2" height="154.4" rx="13" fill="rgba(120,130,150,0.11)" stroke="#8b8e94" stroke-width="2.4" stroke-dasharray="9.2 5.8" stroke-dashoffset="-4"/></svg>
<div class="t" style="left:891.5px;top:517.43px;font-size:13.9px;color:#222;font-weight:400;font-family:'Liberation Sans', sans-serif;">Add a step</div>
<div style="position:absolute;left:563px;top:731px;width:155px;height:154px;box-sizing:border-box;background:#fff;border:2.5px solid #e5e5e5;border-radius:13px;"></div>
<svg style="position:absolute;left:583.5px;top:751.5px;transform-origin:0 0;transform:scale(0.765);" width="32" height="32" viewBox="0 0 32 32"><rect x="4" y="-0.7" width="24.2" height="5.4" rx="1.2" fill="#222"/><rect x="2" y="6.8" width="27.8" height="5.9" rx="1.2" fill="#222"/><rect x="0.3" y="15.2" width="31.7" height="15.8" rx="2.2" fill="#222"/><rect x="9.8" y="21.3" width="12.2" height="3.9" rx="1.9" fill="#fff"/></svg>
<svg style="position:absolute;left:584.4px;top:830px;" width="14" height="14" viewBox="0 0 14 14"><path d="M7,1 L12.5,3 V7 Q12.5,11 7,13.3 Q1.5,11 1.5,7 V3 Z" fill="none" stroke="#e01010" stroke-width="1.6" stroke-linejoin="round"/><path d="M8,5.5 L6.3,9.5" stroke="#e01010" stroke-width="1.4" stroke-linecap="round"/></svg>
<div class="t" style="left:602.5px;top:829px;font-size:13.7px;color:#222;font-weight:400;font-family:'Liberation Sans', sans-serif;">Object Storage</div>
<div class="t" style="left:584.2px;top:847.7px;font-size:13.7px;color:#8a8a8a;font-weight:400;font-family:'Liberation Sans', sans-serif;">get_history</div>
<div style="position:absolute;left:1089px;top:730px;width:156px;height:156px;box-sizing:border-box;background:#fff;border:3px solid #4f86fb;border-radius:14px;"></div>
<svg style="position:absolute;left:1109.8px;top:751.3px;transform-origin:0 0;transform:scale(0.765);" width="32" height="32" viewBox="0 0 32 32"><circle cx="4.6" cy="4.5" r="4.3" fill="#ff8a92"/><circle cx="4.6" cy="16" r="5.0" fill="#ff8a92"/><circle cx="4.6" cy="27.5" r="4.3" fill="#ff8a92"/><circle cx="15" cy="6" r="3.1" fill="#ff8a92"/><circle cx="15" cy="16" r="3.1" fill="#ff8a92"/><circle cx="15" cy="26" r="3.1" fill="#ff8a92"/><circle cx="23.4" cy="7.6" r="2.1" fill="#ff8a92"/><circle cx="23.4" cy="16" r="2.1" fill="#ff8a92"/><circle cx="23.4" cy="24.6" r="2.1" fill="#ff8a92"/><circle cx="29.9" cy="8.6" r="1.3" fill="#ff8a92"/><circle cx="29.9" cy="16" r="1.3" fill="#ff8a92"/><circle cx="29.9" cy="23.2" r="1.3" fill="#ff8a92"/></svg>
<div class="t" style="left:1110.5px;top:829px;font-size:13.7px;color:#222;font-weight:400;font-family:'Liberation Sans', sans-serif;">AI agent</div>
<div class="t" style="left:1110.5px;top:847.9px;font-size:13.7px;color:#8a8a8a;font-weight:400;font-family:'Liberation Sans', sans-serif;">call_ai</div>
<div style="position:absolute;left:1373px;top:731px;width:155px;height:154px;box-sizing:border-box;background:#fff;border:2.5px solid #e5e5e5;border-radius:13px;"></div>
<svg style="position:absolute;left:1394.85px;top:751.6px;transform-origin:0 0;transform:scale(0.765);" width="32" height="32" viewBox="0 0 32 32"><g fill="none" stroke="#222" stroke-width="3.0" stroke-linejoin="round" stroke-linecap="round"><path d="M2.5,13.5 Q0.8,12.5 2.8,11.5 L28.5,5.5 Q31,5 30.2,7.5 L23,25.5 Q22,27.8 20.2,26.3 Z"/><path d="M11.5,16.2 L20.7,11.2"/></g></svg>
<div class="t" style="left:1394.7px;top:829px;font-size:13.7px;color:#222;font-weight:400;font-family:'Liberation Sans', sans-serif;">Telegram bot</div>
<div class="t" style="left:1394.7px;top:847.8px;font-size:13.7px;color:#8a8a8a;font-weight:400;font-family:'Liberation Sans', sans-serif;">send_reply</div>
<div style="position:absolute;left:1657px;top:731px;width:155px;height:154px;box-sizing:border-box;background:#fff;border:2.5px solid #e5e5e5;border-radius:13px;"></div>
<svg style="position:absolute;left:1678.8px;top:750.9px;transform-origin:0 0;transform:scale(0.775);" width="32" height="32" viewBox="0 0 32 32"><rect x="4" y="-0.7" width="24.2" height="5.4" rx="1.2" fill="#222"/><rect x="2" y="6.8" width="27.8" height="5.9" rx="1.2" fill="#222"/><rect x="0.3" y="15.2" width="31.7" height="15.8" rx="2.2" fill="#222"/><rect x="9.8" y="21.3" width="12.2" height="3.9" rx="1.9" fill="#fff"/></svg>
<div class="t" style="left:1679px;top:829px;font-size:13.7px;color:#222;font-weight:400;font-family:'Liberation Sans', sans-serif;">Object Storage</div>
<div class="t" style="left:1679px;top:847.8px;font-size:13.7px;color:#8a8a8a;font-weight:400;font-family:'Liberation Sans', sans-serif;">save_history</div>
<div style="position:absolute;left:419px;top:578.5px;width:24px;height:24px;box-sizing:border-box;background:#4d4d4d;border-radius:50%;"></div>
<svg style="position:absolute;left:425px;top:584.5px;" width="12" height="12" viewBox="0 0 12 12"><path d="M1.3,1.3 L10.7,10.7 M10.7,1.3 L1.3,10.7" stroke="#fff" stroke-width="1.6" stroke-linecap="round"/></svg>
<div style="position:absolute;left:422px;top:653px;width:24px;height:24px;box-sizing:border-box;background:#4d4d4d;border-radius:50%;"></div>
<div style="position:absolute;left:419px;top:728px;width:24px;height:24px;box-sizing:border-box;background:#4d4d4d;border-radius:50%;"></div>
<svg style="position:absolute;left:424px;top:733px;" width="14" height="14" viewBox="0 0 14 14"><path d="M7,1 V13 M1,7 H13" stroke="#fff" stroke-width="1.9"/></svg>
<div style="position:absolute;left:703.3px;top:436px;width:24px;height:24px;box-sizing:border-box;background:#4d4d4d;border-radius:50%;"></div>
<svg style="position:absolute;left:709.3px;top:442px;" width="12" height="12" viewBox="0 0 12 12"><path d="M1.3,1.3 L10.7,10.7 M10.7,1.3 L1.3,10.7" stroke="#fff" stroke-width="1.6" stroke-linecap="round"/></svg>
<div style="position:absolute;left:550.2px;top:510.8px;width:24px;height:24px;box-sizing:border-box;background:#4d4d4d;border-radius:50%;"></div>
<div style="position:absolute;left:706.2px;top:510.8px;width:24px;height:24px;box-sizing:border-box;background:#4d4d4d;border-radius:50%;"></div>
<div style="position:absolute;left:703.3px;top:586px;width:24px;height:24px;box-sizing:border-box;background:#ffdcdc;border-radius:50%;"></div>
<svg style="position:absolute;left:708.3px;top:591px;" width="14" height="14" viewBox="0 0 14 14"><path d="M7,1 V13 M1,7 H13" stroke="#cc1a1a" stroke-width="1.9"/></svg>
<div style="position:absolute;left:835px;top:511px;width:24px;height:24px;box-sizing:border-box;background:#4d4d4d;border-radius:50%;"></div>
<div style="position:absolute;left:703.3px;top:720.5px;width:24px;height:24px;box-sizing:border-box;background:#4d4d4d;border-radius:50%;"></div>
<svg style="position:absolute;left:709.3px;top:726.5px;" width="12" height="12" viewBox="0 0 12 12"><path d="M1.3,1.3 L10.7,10.7 M10.7,1.3 L1.3,10.7" stroke="#fff" stroke-width="1.6" stroke-linecap="round"/></svg>
<div style="position:absolute;left:550.2px;top:795.2px;width:24px;height:24px;box-sizing:border-box;background:#4d4d4d;border-radius:50%;"></div>
<div style="position:absolute;left:706.2px;top:795.2px;width:24px;height:24px;box-sizing:border-box;background:#4d4d4d;border-radius:50%;"></div>
<div style="position:absolute;left:706.2px;top:825.8px;width:24px;height:24px;box-sizing:border-box;background:#4d4d4d;border-radius:50%;"></div>
<div style="position:absolute;left:703.3px;top:870.2px;width:24px;height:24px;box-sizing:border-box;background:#ffdcdc;border-radius:50%;"></div>
<svg style="position:absolute;left:708.3px;top:875.2px;" width="14" height="14" viewBox="0 0 14 14"><path d="M7,1 V13 M1,7 H13" stroke="#cc1a1a" stroke-width="1.9"/></svg>
<div style="position:absolute;left:1229.4px;top:720.7px;width:24px;height:24px;box-sizing:border-box;background:#4d4d4d;border-radius:50%;"></div>
<svg style="position:absolute;left:1235.4px;top:726.7px;" width="12" height="12" viewBox="0 0 12 12"><path d="M1.3,1.3 L10.7,10.7 M10.7,1.3 L1.3,10.7" stroke="#fff" stroke-width="1.6" stroke-linecap="round"/></svg>
<div style="position:absolute;left:1076.4px;top:795.4px;width:24px;height:24px;box-sizing:border-box;background:#4d4d4d;border-radius:50%;"></div>
<div style="position:absolute;left:1232.3px;top:795.4px;width:24px;height:24px;box-sizing:border-box;background:#4d4d4d;border-radius:50%;"></div>
<div style="position:absolute;left:1229.4px;top:870.2px;width:24px;height:24px;box-sizing:border-box;background:#ffdcdc;border-radius:50%;"></div>
<svg style="position:absolute;left:1234.4px;top:875.2px;" width="14" height="14" viewBox="0 0 14 14"><path d="M7,1 V13 M1,7 H13" stroke="#cc1a1a" stroke-width="1.9"/></svg>
<div style="position:absolute;left:1514px;top:720.8px;width:24px;height:24px;box-sizing:border-box;background:#4d4d4d;border-radius:50%;"></div>
<svg style="position:absolute;left:1520px;top:726.8px;" width="12" height="12" viewBox="0 0 12 12"><path d="M1.3,1.3 L10.7,10.7 M10.7,1.3 L1.3,10.7" stroke="#fff" stroke-width="1.6" stroke-linecap="round"/></svg>
<div style="position:absolute;left:1361px;top:795.3px;width:24px;height:24px;box-sizing:border-box;background:#4d4d4d;border-radius:50%;"></div>
<div style="position:absolute;left:1517px;top:795.3px;width:24px;height:24px;box-sizing:border-box;background:#4d4d4d;border-radius:50%;"></div>
<div style="position:absolute;left:1514px;top:870.2px;width:24px;height:24px;box-sizing:border-box;background:#ffdcdc;border-radius:50%;"></div>
<svg style="position:absolute;left:1519px;top:875.2px;" width="14" height="14" viewBox="0 0 14 14"><path d="M7,1 V13 M1,7 H13" stroke="#cc1a1a" stroke-width="1.9"/></svg>
<div style="position:absolute;left:1798.2px;top:720.8px;width:24px;height:24px;box-sizing:border-box;background:#4d4d4d;border-radius:50%;"></div>
<svg style="position:absolute;left:1804.2px;top:726.8px;" width="12" height="12" viewBox="0 0 12 12"><path d="M1.3,1.3 L10.7,10.7 M10.7,1.3 L1.3,10.7" stroke="#fff" stroke-width="1.6" stroke-linecap="round"/></svg>
<div style="position:absolute;left:1645.2px;top:795.3px;width:24px;height:24px;box-sizing:border-box;background:#4d4d4d;border-radius:50%;"></div>
<div style="position:absolute;left:1801px;top:795.3px;width:24px;height:24px;box-sizing:border-box;background:#4d4d4d;border-radius:50%;"></div>
<div style="position:absolute;left:1798.2px;top:870.2px;width:24px;height:24px;box-sizing:border-box;background:#ffdcdc;border-radius:50%;"></div>
<svg style="position:absolute;left:1803.2px;top:875.2px;" width="14" height="14" viewBox="0 0 14 14"><path d="M7,1 V13 M1,7 H13" stroke="#cc1a1a" stroke-width="1.9"/></svg>
<div style="position:absolute;left:310px;top:40px;width:72px;height:144px;box-sizing:border-box;background:#fff;border-radius:15px;box-shadow:0 3px 10px rgba(0,0,0,0.10);"></div>
<div style="position:absolute;left:310px;top:111.5px;width:72px;height:1px;box-sizing:border-box;background:#f8f8f8;"></div>
<svg style="position:absolute;left:333px;top:62px;" width="26" height="27" viewBox="0 0 26 27"><path d="M10,1 L2,8.5 L10,16 M2,8.5 H15 A8.7,8.7 0 0 1 15,26 H12" fill="none" stroke="#222" stroke-width="2.5" stroke-linecap="round" stroke-linejoin="round"/></svg>
<svg style="position:absolute;left:333px;top:134px;" width="26" height="27" viewBox="0 0 26 27"><path d="M16,1 L24,8.5 L16,16 M24,8.5 H11 A8.7,8.7 0 0 0 11,26 H14" fill="none" stroke="#a3a3a3" stroke-width="2.5" stroke-linecap="round" stroke-linejoin="round"/></svg>
<div style="position:absolute;left:310px;top:1184px;width:72px;height:216px;box-sizing:border-box;background:#fff;border-radius:15px;box-shadow:0 3px 10px rgba(0,0,0,0.10);"></div>
<div style="position:absolute;left:310px;top:1255.5px;width:72px;height:1px;box-sizing:border-box;background:#fbfbfb;"></div>
<div style="position:absolute;left:310px;top:1327.5px;width:72px;height:1px;box-sizing:border-box;background:#fbfbfb;"></div>
<svg style="position:absolute;left:331px;top:1205px;" width="30" height="30" viewBox="0 0 30 30"><circle cx="12.5" cy="12.5" r="10" fill="none" stroke="#222" stroke-width="2.6"/><path d="M20,20 L27,27" stroke="#222" stroke-width="2.8" stroke-linecap="round"/><path d="M12.5,7.5 V17.5 M7.5,12.5 H17.5" stroke="#222" stroke-width="2.6"/></svg>
<svg style="position:absolute;left:331px;top:1278px;" width="30" height="28" viewBox="0 0 30 28"><path d="M2.5,9 V6 Q2.5,2.5 6,2.5 H9 M19,2.5 H22 Q25.5,2.5 25.5,6 V9 M25.5,19 V22 Q25.5,25.5 22,25.5 H19 M9,25.5 H6 Q2.5,25.5 2.5,22 V19" fill="none" stroke="#222" stroke-width="2.6" stroke-linecap="round"/></svg>
<svg style="position:absolute;left:331px;top:1350px;" width="30" height="30" viewBox="0 0 30 30"><circle cx="12.5" cy="12.5" r="10" fill="none" stroke="#222" stroke-width="2.6"/><path d="M20,20 L27,27" stroke="#222" stroke-width="2.8" stroke-linecap="round"/><path d="M7.5,12.5 H17.5" stroke="#222" stroke-width="2.6"/></svg>
<div style="position:absolute;left:1728px;top:40px;width:72px;height:72px;box-sizing:border-box;background:#fff;border-radius:15px;box-shadow:0 3px 10px rgba(0,0,0,0.10);"></div>
<div style="position:absolute;left:1728px;top:120px;width:72px;height:72px;box-sizing:border-box;background:#fff;border-radius:15px;box-shadow:0 3px 10px rgba(0,0,0,0.10);"></div>
<svg style="position:absolute;left:1746px;top:59px;" width="36" height="36" viewBox="0 0 36 36"><path d="M21.5,2.5 V13.5 H32.5 M2.5,20.5 H14.5 V31.5" fill="none" stroke="#222" stroke-width="2.6" stroke-linecap="round" stroke-linejoin="round"/></svg>
<svg style="position:absolute;left:1748px;top:140px;" width="34" height="32" viewBox="0 0 34 32"><path d="M2.5,15.5 H22 M16,9 L22.5,15.5 L16,22 M28.5,2.5 V28.5" fill="none" stroke="#222" stroke-width="2.6" stroke-linecap="round" stroke-linejoin="round"/></svg>
</div></div>
<div class="t" style="left:1892.5px;top:37.65px;font-size:26.4px;color:#212121;font-weight:400;font-family:'Liberation Sans', sans-serif;">Settings</div>
<div class="t" style="left:2038.5px;top:37.65px;font-size:26.4px;color:#8c8c8c;font-weight:400;font-family:'Liberation Sans', sans-serif;">Input</div>
<div class="t" style="left:2147.5px;top:37.65px;font-size:26.4px;color:#8c8c8c;font-weight:400;font-family:'Liberation Sans', sans-serif;">Output</div>
<div style="position:absolute;left:1892px;top:86px;width:651.5px;height:2px;box-sizing:border-box;background:#e5e5e5;"></div>
<div style="position:absolute;left:1892px;top:84px;width:98px;height:3.5px;box-sizing:border-box;background:#5282ff;"></div>
<div style="position:absolute;left:1860px;top:88px;width:697px;height:1256px;overflow:hidden;">
<div style="position:absolute;left:-1860px;top:-88px;width:2560px;height:1440px;">
<div style="position:absolute;left:2514px;top:88px;width:30px;height:1256px;box-sizing:border-box;background:#fbfbfb;"></div>
<svg style="position:absolute;left:2520px;top:100.5px;" width="18" height="10" viewBox="0 0 18 10"><path d="M0,9.5 L9,0.5 L18,9.5 Z" fill="#8c8c8c"/></svg>
<div style="position:absolute;left:2520px;top:124px;width:18px;height:548px;box-sizing:border-box;background:#8c8c8c;border-radius:9px;"></div>
<svg style="position:absolute;left:2520px;top:1319px;" width="18" height="10" viewBox="0 0 18 10"><path d="M0,0.5 L9,9.5 L18,0.5 Z" fill="#8c8c8c"/></svg>
<div class="t" style="left:1892.5px;top:132.53px;font-size:25.6px;color:#212121;font-weight:400;font-family:'Liberation Sans', sans-serif;">Step name<span style="color:#e60000;">*</span></div>
<div style="position:absolute;left:1892.5px;top:174px;width:605px;height:55.5px;box-sizing:border-box;border:2px solid #e0e0e0;border-radius:11px;"></div>
<div class="t" style="left:1910.8px;top:190.54px;font-size:25px;color:#212121;font-weight:400;font-family:'Liberation Sans', sans-serif;">call_ai</div>
<div style="position:absolute;left:1892.5px;top:263px;width:604.5px;height:1200px;box-sizing:border-box;border:2px solid #e5e5e5;border-radius:20px;"></div>
<div class="t" style="left:1935.5px;top:310.47px;font-size:28.5px;color:#212121;font-weight:700;font-family:'Liberation Sans', sans-serif;-webkit-text-stroke:0;">AI agent settings</div>
<div class="t" style="left:1935.5px;top:398.04px;font-size:25.7px;color:#212121;font-weight:400;font-family:'Liberation Sans', sans-serif;">Model<span style="color:#e60000;">*</span></div>
<svg style="position:absolute;left:2022px;top:395.8px;" width="32" height="32" viewBox="0 0 32 32"><circle cx="16" cy="16" r="12.85" fill="none" stroke="#b3b3b3" stroke-width="2.3"/><path d="M12,13.7 q0,-4 4,-4 q4,0 4,3.6 q0,2.3 -2.5,3.4 q-1.5,0.7 -1.5,2.2" fill="none" stroke="#b3b3b3" stroke-width="2.6" stroke-linecap="round" stroke-linejoin="round"/><circle cx="16" cy="21.9" r="1.9" fill="#b3b3b3"/></svg>
<div style="position:absolute;left:1934.7px;top:440px;width:520.5px;height:55.5px;box-sizing:border-box;border:2px solid #e0e0e0;border-radius:11px;"></div>
<div class="t" style="left:1952.6px;top:454.54px;font-size:25.7px;color:#212121;font-weight:400;font-family:'Liberation Sans', sans-serif;">YandexGPT Pro</div>
<svg style="position:absolute;left:2410px;top:461px;" width="24" height="15" viewBox="0 0 24 15"><path d="M2,2 L12,12 L22,2" fill="none" stroke="#444" stroke-width="2.6" stroke-linecap="round" stroke-linejoin="round"/></svg>
<div class="t" style="left:1935.5px;top:542.24px;font-size:25.7px;color:#212121;font-weight:400;font-family:'Liberation Sans', sans-serif;">Role<span style="color:#e60000;">*</span></div>
<svg style="position:absolute;left:2000px;top:540.3px;" width="32" height="32" viewBox="0 0 32 32"><circle cx="16" cy="16" r="12.85" fill="none" stroke="#b3b3b3" stroke-width="2.3"/><path d="M12,13.7 q0,-4 4,-4 q4,0 4,3.6 q0,2.3 -2.5,3.4 q-1.5,0.7 -1.5,2.2" fill="none" stroke="#b3b3b3" stroke-width="2.6" stroke-linecap="round" stroke-linejoin="round"/><circle cx="16" cy="21.9" r="1.9" fill="#b3b3b3"/></svg>
<svg style="position:absolute;left:2378px;top:544px;" width="32" height="24" viewBox="0 0 32 24"><path d="M8,5 L2.5,10.3 L8,15.5 M19,0 L13.1,20.6 M23.8,5 L29.3,10.3 L23.8,15.5" fill="none" stroke="#4a7af0" stroke-width="2.6" stroke-linecap="round" stroke-linejoin="round"/></svg>
<div class="t" style="left:2414px;top:543.18px;font-size:24.6px;color:#4a7af0;font-weight:400;font-family:'Liberation Sans', sans-serif;">JQ</div>
<div style="position:absolute;left:1934.7px;top:584.5px;width:520.5px;height:55px;box-sizing:border-box;border:2px solid #e0e0e0;border-radius:11px;"></div>
<div class="t" style="left:1952.6px;top:599.74px;font-size:25.7px;color:#212121;font-weight:400;font-family:'Liberation Sans', sans-serif;">You are a movie selection consultant</div>
<div class="t" style="left:1935.5px;top:685.94px;font-size:25.7px;color:#212121;font-weight:400;font-family:'Liberation Sans', sans-serif;">Goal<span style="color:#e60000;">*</span></div>
<svg style="position:absolute;left:2004px;top:684px;" width="32" height="32" viewBox="0 0 32 32"><circle cx="16" cy="16" r="12.85" fill="none" stroke="#b3b3b3" stroke-width="2.3"/><path d="M12,13.7 q0,-4 4,-4 q4,0 4,3.6 q0,2.3 -2.5,3.4 q-1.5,0.7 -1.5,2.2" fill="none" stroke="#b3b3b3" stroke-width="2.6" stroke-linecap="round" stroke-linejoin="round"/><circle cx="16" cy="21.9" r="1.9" fill="#b3b3b3"/></svg>
<svg style="position:absolute;left:2378px;top:688px;" width="32" height="24" viewBox="0 0 32 24"><path d="M8,5 L2.5,10.3 L8,15.5 M19,0 L13.1,20.6 M23.8,5 L29.3,10.3 L23.8,15.5" fill="none" stroke="#4a7af0" stroke-width="2.6" stroke-linecap="round" stroke-linejoin="round"/></svg>
<div class="t" style="left:2414px;top:687.18px;font-size:24.6px;color:#4a7af0;font-weight:400;font-family:'Liberation Sans', sans-serif;">JQ</div>
<div style="position:absolute;left:1934.6px;top:729px;width:520px;height:198px;box-sizing:border-box;border:2px solid #e0e0e0;border-radius:11px;background:#fffffe;overflow:hidden;"></div>
<div style="position:absolute;left:1946px;top:732.7px;width:508.6px;height:35.1px;box-sizing:border-box;border:3px solid #ececec;border-right:none;"></div>
<div style="position:absolute;left:1946px;top:728.1px;width:508.6px;height:40px;overflow:hidden;">
<div class="t" style="left:0;top:10.33px;font-size:25.65px;font-family:'Liberation Mono', monospace;color:#000080;-webkit-text-stroke:0.1px currentColor;"><span style="color:#d01818;">H</span>elp the user find a movie to watch</div>
</div>
<div class="t" style="left:1935.5px;top:974.44px;font-size:25.7px;color:#212121;font-weight:400;font-family:'Liberation Sans', sans-serif;">Backstory</div>
<svg style="position:absolute;left:2054px;top:972px;" width="32" height="32" viewBox="0 0 32 32"><circle cx="16" cy="16" r="12.85" fill="none" stroke="#b3b3b3" stroke-width="2.3"/><path d="M12,13.7 q0,-4 4,-4 q4,0 4,3.6 q0,2.3 -2.5,3.4 q-1.5,0.7 -1.5,2.2" fill="none" stroke="#b3b3b3" stroke-width="2.6" stroke-linecap="round" stroke-linejoin="round"/><circle cx="16" cy="21.9" r="1.9" fill="#b3b3b3"/></svg>
<svg style="position:absolute;left:2378px;top:976px;" width="32" height="24" viewBox="0 0 32 24"><path d="M8,5 L2.5,10.3 L8,15.5 M19,0 L13.1,20.6 M23.8,5 L29.3,10.3 L23.8,15.5" fill="none" stroke="#4a7af0" stroke-width="2.6" stroke-linecap="round" stroke-linejoin="round"/></svg>
<div class="t" style="left:2414px;top:975.18px;font-size:24.6px;color:#4a7af0;font-weight:400;font-family:'Liberation Sans', sans-serif;">JQ</div>
<div style="position:absolute;left:1934.6px;top:1017px;width:520px;height:198px;box-sizing:border-box;border:2px solid #e0e0e0;border-radius:11px;background:#fffffe;overflow:hidden;"></div>
<div style="position:absolute;left:1946px;top:1020px;width:508.6px;height:35.7px;box-sizing:border-box;border:3px solid #ececec;border-right:none;"></div>
<div style="position:absolute;left:1946px;top:1016px;width:508.6px;height:40px;overflow:hidden;">
<div class="t" style="left:0;top:10.33px;font-size:25.65px;font-family:'Liberation Mono', monospace;color:#000080;-webkit-text-stroke:0.1px currentColor;"><span style="color:#d01818;">H</span>istory of previous conversations</div>
</div>
<div class="t" style="left:1934.4px;top:1261.94px;font-size:25.7px;color:#212121;font-weight:400;font-family:'Liberation Sans', sans-serif;">Knowledge sources</div>
<svg style="position:absolute;left:2164px;top:1259.5px;" width="32" height="32" viewBox="0 0 32 32"><circle cx="16" cy="16" r="12.85" fill="none" stroke="#b3b3b3" stroke-width="2.3"/><path d="M12,13.7 q0,-4 4,-4 q4,0 4,3.6 q0,2.3 -2.5,3.4 q-1.5,0.7 -1.5,2.2" fill="none" stroke="#b3b3b3" stroke-width="2.6" stroke-linecap="round" stroke-linejoin="round"/><circle cx="16" cy="21.9" r="1.9" fill="#b3b3b3"/></svg>
<div style="position:absolute;left:1934px;top:1304px;width:56px;height:56px;box-sizing:border-box;background:#f2f2f2;border-radius:12px;"></div>
<svg style="position:absolute;left:1949px;top:1318px;" width="26" height="26" viewBox="0 0 26 26"><path d="M13,2 V24 M2,13 H24" stroke="#222" stroke-width="2.6"/></svg>
</div></div>
<div style="position:absolute;left:1892.3px;top:1352px;width:651.3px;height:71.2px;box-sizing:border-box;border:2px solid #ffb5b5;border-radius:15px;"></div>
<div class="t" style="left:2153px;top:1374.14px;font-size:25.7px;color:#f4a3a3;font-weight:400;font-family:'Liberation Sans', sans-serif;">Delete step</div>
</body></html>
